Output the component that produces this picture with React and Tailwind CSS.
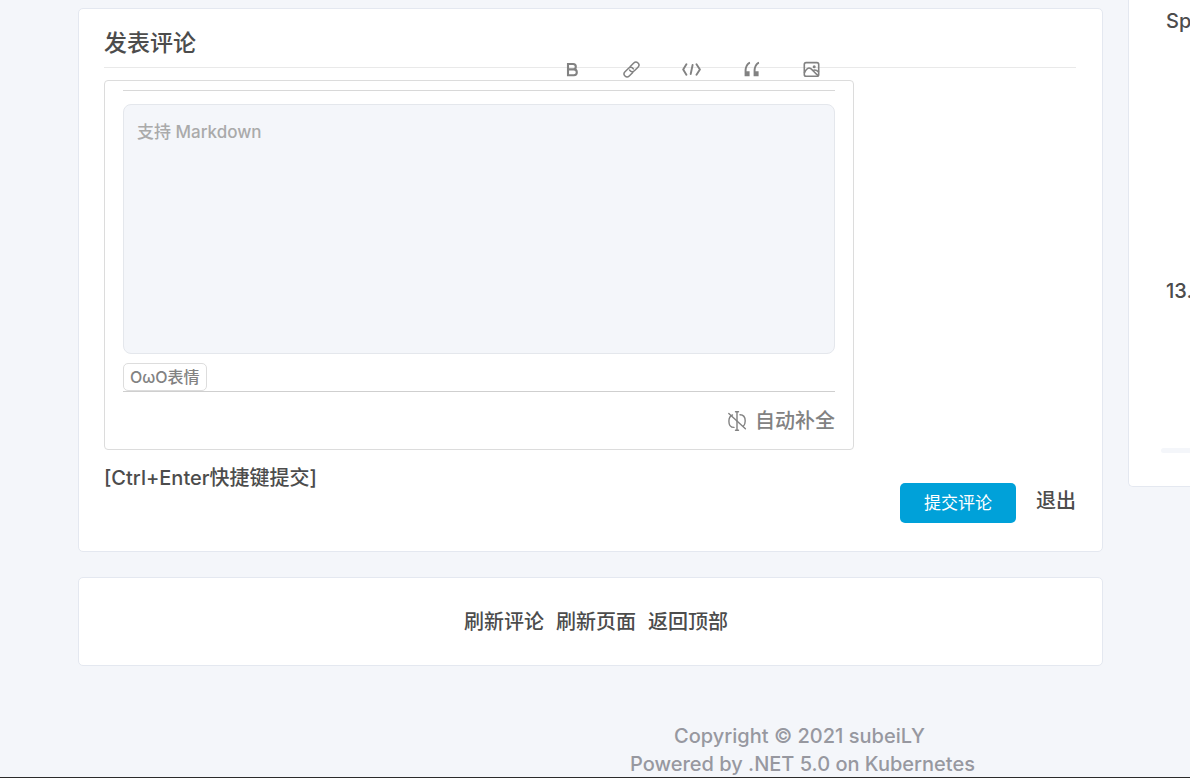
import React from "react";

const stroke = { fill: "none", stroke: "currentColor", strokeLinecap: "round", strokeLinejoin: "round" };

function BoldIcon() {
  return (
    <svg viewBox="0 0 20 20" className="size-5" {...stroke} strokeWidth="2.1">
      <path d="M7 5h5.100a2.700 2.700 0 0 1 0 5.400H7zM7 10.400h5.900a2.900 2.900 0 0 1 0 5.800H7z" strokeLinejoin="miter" />
    </svg>
  );
}

function LinkIcon() {
  return (
    <svg viewBox="0 0 20 20" className="size-5" {...stroke} strokeWidth="1.5">
      <g transform="rotate(-45 10.5 10.5)">
        <path d="M9.300 13.500H4.300a3 3 0 0 1 0-6h5.100a3 3 0 0 1 2.800 3.900" />
        <path d="M11.700 7.500h5a3 3 0 0 1 0 6h-5.100a3 3 0 0 1-2.800-3.900" />
      </g>
    </svg>
  );
}

function CodeIcon() {
  return (
    <svg viewBox="0 0 20 20" className="size-5" {...stroke} strokeWidth="1.900">
      <path d="M5.400 5.300 2.200 10.500l3.200 5.200M15.500 5.300l3.400 5.200-3.400 5.200M11.600 6 9.700 15" />
    </svg>
  );
}

function QuoteIcon() {
  return (
    <svg viewBox="0 0 20 20" className="size-5" fill="currentColor">
      <path d="M8.800 2.800C5.500 4 3.600 7.800 3.600 12.500v4.700h5v-4.900H5.500c0-3.800 1.200-6.400 3.700-7.700z" />
      <path d="M17.800 2.800C14.500 4 12.600 7.800 12.600 12.500v4.700h5v-4.900h-3.100c0-3.800 1.200-6.400 3.700-7.700z" />
    </svg>
  );
}

function ImageIcon() {
  return (
    <svg viewBox="0 0 20 20" className="size-5" {...stroke} strokeWidth="1.600">
      <rect x="3.300" y="3.600" width="14.400" height="13.600" rx="1.800" />
      <path d="M3.500 13.500c1.500-2.800 3-4.500 4.700-4.500 2.500 0 4.300 4.200 8.800 7.500M11.800 11.600c1.700-1 3.600-.8 5.700 1.200" />
      <circle cx="13.200" cy="7.700" r=".7" />
    </svg>
  );
}

function AutoOffIcon() {
  return (
    <svg viewBox="0 0 20 20" className="size-5" {...stroke} strokeWidth="1.400">
      <path d="M10 1v18M8.500 .8h3M8.500 19.200h3" />
      <path d="M5.500 4C3.200 4.800 1.900 7 1.900 10.200c0 3.700 1.900 6.200 5.100 6.200M13 3.800c3.300 0 5.200 2.600 5.200 6.200 0 2-.6 3.800-1.700 4.900M1.800 2.500l16.600 15.200" />
    </svg>
  );
}

const tools = [
  ["粗体", BoldIcon],
  ["链接", LinkIcon],
  ["代码", CodeIcon],
  ["引用", QuoteIcon],
  ["图片", ImageIcon],
];

const card = "rounded-[5px] border border-[#e4e8f0] bg-white";

export default function App() {
  return (
    <div className="min-h-screen overflow-hidden border-b border-[#2b2b2b] bg-[#f4f6fa] font-['Inter','Noto_Sans_CJK_SC',sans-serif] text-xl leading-7 font-medium text-[#4c4c4c]">
      <div className="flex items-start gap-[25px] pl-[78px]">
        <main className="min-w-0 flex-1 pt-2">
          <section className={`${card} pt-5 pr-[26px] pb-7 pl-[25px]`}>
            <h2 className="border-b border-[#e9e9e9] pb-[10px] text-[23px] leading-7">发表评论</h2>
            <form className="pt-3" onSubmit={(e) => e.preventDefault()}>
              <div className="max-w-[750px] rounded-[4px] border border-[#dcdcdc] px-[18px] text-[#828282]">
                <div className="-mt-[22px] flex h-8 items-start justify-end gap-10 border-b border-[#d8d8d8] pr-[14px]">
                  {tools.map(([label, Icon]) => (
                    <button key={label} type="button" aria-label={label}>
                      <Icon />
                    </button>
                  ))}
                </div>
                <textarea
                  aria-label="评论内容"
                  placeholder="支持 Markdown"
                  className="mt-[13px] block h-[250px] w-full resize-none rounded-lg border border-[#e4e7ec] bg-[#f4f6fa] px-[13px] py-[13px] text-[17px] leading-7 placeholder:text-[#aaaaaa]"
                />
                <div className="mt-[9px] border-b border-[#cfcfcf]">
                  <button type="button" className="block h-7 rounded-[5px] border border-[#dddddd] px-[6px] text-base leading-6">
                    OωO表情
                  </button>
                </div>
                <div className="flex justify-end pt-[15px] pb-[14px]">
                  <button type="button" className="flex items-center gap-2">
                    <AutoOffIcon />
                    自动补全
                  </button>
                </div>
              </div>
              <p className="pt-[14px]">[Ctrl+Enter快捷键提交]</p>
              <div className="-mt-[9px] flex items-start justify-end gap-5">
                <button type="submit" className="h-10 rounded-[5px] bg-[#00a1d9] px-6 text-[17px] font-normal text-white">
                  提交评论
                </button>
                <a href="#logout" className="pt-1">退出</a>
              </div>
            </form>
          </section>
          <nav className={`${card} mt-[25px] flex justify-center gap-3 pt-[30px] pb-[29px] pl-[11px]`}>
            <a href="#comments">刷新评论</a>
            <a href="#page">刷新页面</a>
            <a href="#top">返回顶部</a>
          </nav>
        </main>
        <aside className="w-[62px] shrink-0 overflow-hidden rounded-bl-[5px] border-b border-l border-[#e4e8f0] bg-white pt-[7px] pb-[33px] pl-8 whitespace-nowrap">
          <p className="pl-[5px]">Sp</p>
          <p className="mt-[242px] pl-[5px]">13.</p>
          <div className="mt-[143px] h-[5px] rounded-l-[3px] bg-[#f4f6fa]" />
        </aside>
      </div>
      <footer className="mt-14 -mr-[415px] -mb-[2px] text-center text-[#9798a0]">
        <p className="pr-[6px]">Copyright © 2021 subeiLY</p>
        <p>Powered by .NET 5.0 on Kubernetes</p>
      </footer>
    </div>
  );
}
